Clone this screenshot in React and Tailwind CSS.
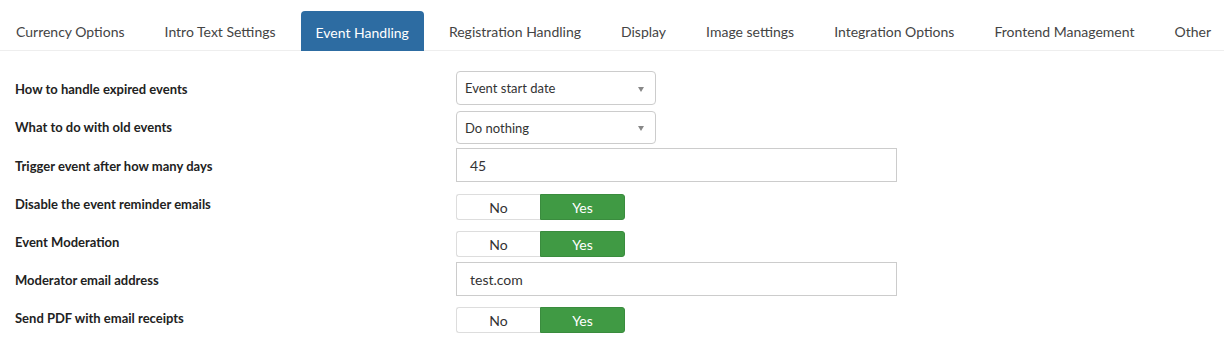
import React from "react";

const tabs = [
  "Currency Options",
  "Intro Text Settings",
  "Event Handling",
  "Registration Handling",
  "Display",
  "Image settings",
  "Integration Options",
  "Frontend Management",
  "Other",
];

function Select({ value, h }) {
  return (
    <div className={`w-[200px] ${h} border border-[#ccc] rounded-[4px] flex items-center justify-between pl-[8px] pr-[11px] pt-[2px] text-[13px] text-[#333] bg-white`}>
      <span>{value}</span>
      <span className="w-0 h-0 border-l-[3.5px] border-r-[3.5px] border-t-[5px] border-l-transparent border-r-transparent border-t-[#888]" />
    </div>
  );
}

function TextInput({ value }) {
  return (
    <div className="w-[441px] h-[34px] border border-[#ccc] flex items-center pl-[13px] text-[14px] text-[#333] bg-white">
      {value}
    </div>
  );
}

function Toggle() {
  return (
    <div className="flex w-[169px] h-[26px] text-[14px]">
      <div className="w-[84px] h-full flex items-center justify-center border border-[#ddd] border-r-0 rounded-l-[3px] text-[#333] bg-white">
        No
      </div>
      <div className="w-[85px] h-full flex items-center justify-center bg-[#409a44] border border-[#3a8c3e] rounded-r-[3px] text-white">
        Yes
      </div>
    </div>
  );
}

function Row({ label, children, cls, lcls }) {
  return (
    <div className={`flex items-start ${cls}`}>
      <div className={`w-[456px] shrink-0 pl-[15px] text-[13px] leading-[16px] font-bold text-[#222] ${lcls}`}>{label}</div>
      {children}
    </div>
  );
}

export default function App() {
  return (
    <div className="w-[1224px] h-[353px] bg-white overflow-hidden" style={{ fontFamily: "Lato, 'Open Sans', sans-serif" }}>
      <div className="flex items-end h-[51px] border-b border-[#eee] pl-[1px]">
        {tabs.map((t) => (
          <div
            key={t}
            className={
              t === "Event Handling"
                ? "h-[40px] px-[15px] mr-[10px] pt-[2px] shrink-0 whitespace-nowrap flex items-center text-[14px] text-white bg-[#2d6ca2] rounded-t-[4px] mb-[-1px]"
                : "h-[40px] px-[15px] mr-[10px] pt-[2px] shrink-0 whitespace-nowrap flex items-center text-[14px] text-[#444]"
            }
          >
            {t}
          </div>
        ))}
      </div>
      <div className="flex flex-col">
        <Row label="How to handle expired events" cls="mt-[20px]" lcls="pt-[10px]">
          <Select value="Event start date" h="h-[34px]" />
        </Row>
        <Row label="What to do with old events" cls="mt-[6px]" lcls="pt-[8px]">
          <Select value="Do nothing" h="h-[33px]" />
        </Row>
        <Row label="Trigger event after how many days" cls="mt-[4px]" lcls="pt-[10px]">
          <TextInput value="45" />
        </Row>
        <Row label="Disable the event reminder emails" cls="mt-[12px]" lcls="pt-[2px]">
          <Toggle />
        </Row>
        <Row label="Event Moderation" cls="mt-[11px]" lcls="pt-[3px]">
          <Toggle />
        </Row>
        <Row label="Moderator email address" cls="mt-[5px]" lcls="pt-[10px]">
          <TextInput value="test.com" />
        </Row>
        <Row label="Send PDF with email receipts" cls="mt-[11px]" lcls="pt-[3px]">
          <Toggle />
        </Row>
      </div>
    </div>
  );
}
